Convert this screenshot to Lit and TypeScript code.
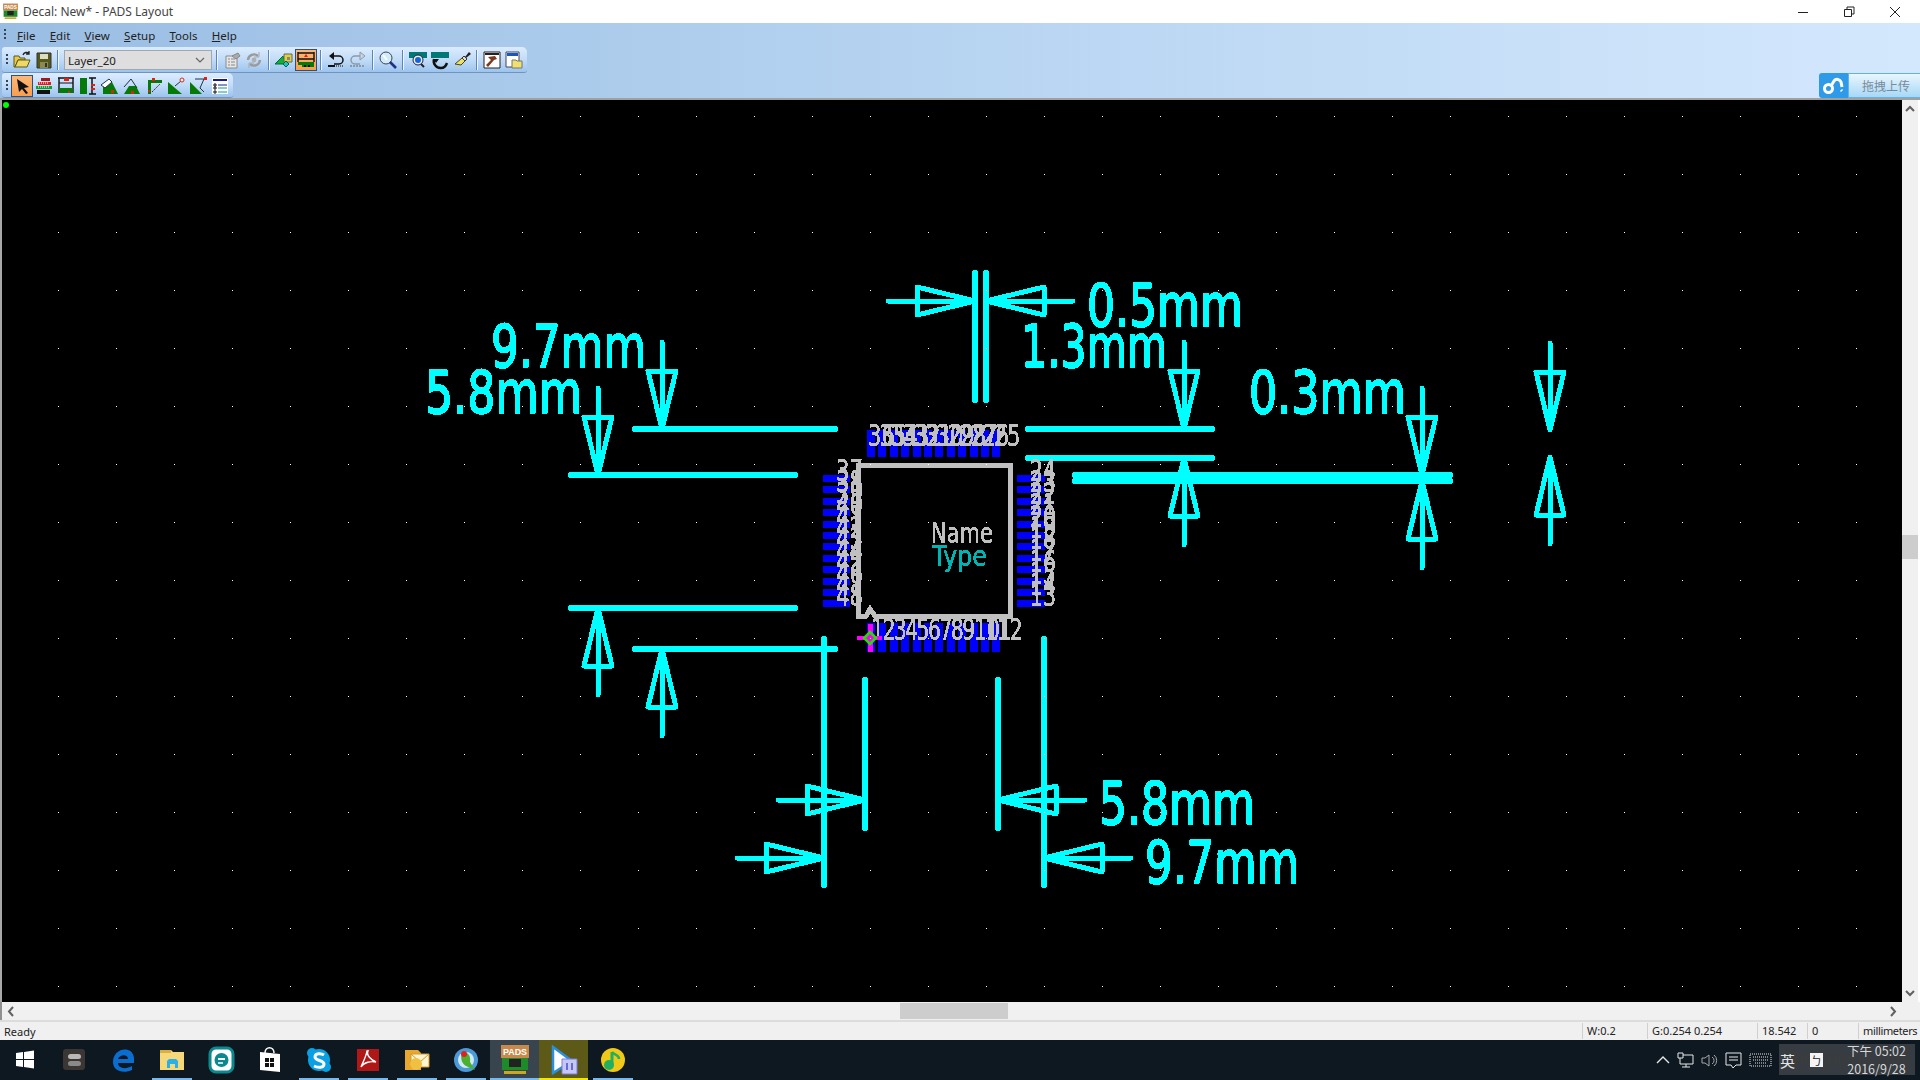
import {LitElement, css, html, svg} from 'lit';
import {customElement} from 'lit/decorators.js';

// --- decal drawing data, all in window pixels (the svg viewBox starts at the canvas corner)

type Dir = 'up' | 'down' | 'left' | 'right';

const LINES: number[][] = [
  [632, 429, 838, 429], [568, 475, 798, 475], [568, 608, 798, 608], [632, 649, 838, 649],
  [1025, 429, 1215, 429], [1025, 458, 1215, 458], [1072, 475, 1453, 475], [1072, 481, 1453, 481],
  [975, 270, 975, 403], [986, 270, 986, 403],
  [824, 636, 824, 888], [865, 677, 865, 831], [998, 677, 998, 831], [1044, 636, 1044, 888],
];

// tip x, tip y, direction from the tip to the tail
const ARROWS: [number, number, Dir][] = [
  [662, 429, 'up'], [598, 475, 'up'], [1184, 429, 'up'], [1422, 475, 'up'], [1550, 430, 'up'],
  [598, 608, 'down'], [662, 649, 'down'], [1184, 458, 'down'], [1422, 481, 'down'], [1550, 457, 'down'],
  [975, 301, 'left'], [986, 301, 'right'],
  [865, 800, 'left'], [824, 858, 'left'], [998, 800, 'right'], [1044, 858, 'right'],
];

const DIMS: [string, number, number, number][] = [
  ['9.7mm', 491, 367, 155], ['5.8mm', 425, 413, 157], ['0.5mm', 1087, 326, 156], ['1.3mm', 1021, 367, 146],
  ['0.3mm', 1249, 413, 157], ['5.8mm', 1099, 824, 156], ['9.7mm', 1145, 883, 154],
];

const PITCH = 11.4;
const idx = Array.from({length: 12}, (_, i) => i);

function arrow(x: number, y: number, d: Dir) {
  const v = d === 'up' || d === 'down';
  const s = d === 'up' || d === 'left' ? -1 : 1;
  const pt = (along: number, across: number) => (v ? [x + across, y + s * along] : [x + s * along, y + across]);
  const [tx, ty] = pt(87, 0);
  const a = pt(58, -14);
  const b = pt(58, 14);
  return svg`<line class="dim" x1=${x} y1=${y} x2=${tx} y2=${ty}></line>
    <polygon class="tri" points="${x},${y} ${a[0]},${a[1]} ${b[0]},${b[1]}"></polygon>`;
}

// the coordinates above include the round caps, so pull the ends in by 3
function dimLine([x1, y1, x2, y2]: number[]) {
  const h = y1 === y2 ? 3 : 0;
  const v = x1 === x2 ? 3 : 0;
  return svg`<line class="line" x1=${x1 + h} y1=${y1 + v} x2=${x2 - h} y2=${y2 - v}></line>`;
}

function label(t: string, x: number, y: number, w: number, cls: string) {
  return svg`<text class=${cls} x=${x} y=${y} textLength=${w} lengthAdjust="spacingAndGlyphs">${t}</text>`;
}

// --- toolbar icons, 20x20

const ICONS: Record<string, unknown> = {
  open: svg`<path d="M2 17V6h5l1 2h5v2H6l-3 7z" fill="#e8c850" stroke="#5a5a10"/><path d="M3 17l3-7h12l-3 7z" fill="#f0d868" stroke="#5a5a10"/><path d="M11 5c1-3 4-3 6-2M17 1v3h-3" fill="none" stroke="#222" stroke-width="1.3"/>`,
  save: svg`<path d="M3 3h14v15H3z" fill="#55581a" stroke="#333"/><path d="M6 4h8v5H6z" fill="#dcdcc0"/><path d="M6 12h8v6H6z" fill="#8a8a50"/><path d="M11 13h2v4h-2z" fill="#333"/>`,
  props: svg`<path d="M4 6h11v12H4z" fill="#e6e6e6" stroke="#8a8a8a"/><path d="M6 9h2M6 12h2M6 15h2M9 9h4M9 12h4M9 15h4" stroke="#888"/><path d="M10 6l6-3 2 3-4 3z" fill="#aaa" stroke="#888"/>`,
  refresh: svg`<path d="M4 10a6 6 0 0 1 10-4M16 10a6 6 0 0 1-10 4" fill="none" stroke="#9a9a9a" stroke-width="2.4"/><path d="M15 2v5h-5M5 18v-5h5" fill="none" stroke="#a8a8a8"/><circle cx="10" cy="10" r="2.4" fill="#b0b0b0"/>`,
  layer: svg`<path d="M1 14l8-8 3 8z" fill="#10b030" stroke="#064"/><path d="M10 4h8v8h-8z" fill="#e0d040" stroke="#665"/><path d="M13 7h3v3h-3z" fill="#887"/><path d="M12 11l3 3-3 3-3-3z" fill="#20c0d0" stroke="#064"/>`,
  decal: svg`<path d="M2 2v10M18 2v10M2 3h16M2 9h16" stroke="#111" stroke-width="1.4"/><path d="M8 7l2-3 2 3z" fill="#e02010"/><path d="M2 12h16v5H6v-2H2z" fill="#067a06"/><path d="M8 15h2v2H8zM12 15h2v2h-2z" fill="#111"/>`,
  undo: svg`<path d="M6 6h7a4 4 0 0 1 0 8H8" fill="none" stroke="#111" stroke-width="1.5"/><path d="M8 2L3 6l5 4z" fill="#111"/><path d="M2 16h7" stroke="#111" stroke-width="2"/><path d="M10 16h7" stroke="#666" stroke-dasharray="1 1" stroke-width="2"/>`,
  redo: svg`<path d="M14 6H7a4 4 0 0 0 0 8h5" fill="none" stroke="#8c9aa8" stroke-width="1.5"/><path d="M12 2l5 4-5 4z" fill="#c8d4e0" stroke="#8c9aa8"/><path d="M2 16h15" stroke="#8c9aa8" stroke-dasharray="2 1" stroke-width="2"/>`,
  zoom: svg`<circle cx="8" cy="8" r="6" fill="#d0ecf8" stroke="#445"/><path d="M5 5l4 5" stroke="#fff" stroke-width="2"/><path d="M12 12l6 6" stroke="#22308a" stroke-width="2.6"/>`,
  zoomBar: svg`<path d="M1 2h18v6H1z" fill="#007878"/><circle cx="10" cy="10" r="5" fill="#eef" stroke="#223"/><circle cx="10" cy="10" r="3" fill="#1464d8"/><path d="M13 14l3 3" stroke="#223" stroke-width="2"/>`,
  redraw: svg`<path d="M1 2h18v6H1z" fill="#007878"/><path d="M4 9a7 7 0 0 0 7 9c3 0 5-2 6-5" fill="none" stroke="#111" stroke-width="2.4"/><path d="M3 9h6l-3 4z" fill="#111"/>`,
  brush: svg`<path d="M13 7l4-5 2 2-5 4z" fill="#222"/><path d="M12 6l3 3-2 2-3-3z" fill="#ddd" stroke="#333"/><path d="M10 8l3 3-4 4-6-1z" fill="#f0e060" stroke="#443"/><path d="M3 17h6" stroke="#e8d840" stroke-dasharray="1 1"/>`,
  hammer: svg`<path d="M2 2h16v16H2z" fill="#fff" stroke="#222"/><path d="M3 3h14v2H3z" fill="#222"/><path d="M6 7l7-1 2 3-3 1-6 7-2-2 5-5z" fill="#7a3a20"/>`,
  folderWin: svg`<path d="M2 2h13v15H2z" fill="#fff" stroke="#445"/><path d="M3 3h11v3H3z" fill="#1a58b8"/><path d="M8 10h4l1 1h5v7H8z" fill="#f0e070" stroke="#776"/>`,
  arrow: svg`<path d="M5 3l12 8-5 1 4 5-2 1-4-5-3 3z" fill="#111"/>`,
  stack: svg`<path d="M7 2h9v3H7z" fill="#a01818"/><path d="M4 6h13v3H4z" fill="#e02020"/><path d="M2 10h16v3H2z" fill="#10a030"/><path d="M3 14h13v4H3z" fill="#111"/><path d="M5 7h10M4 11h12" stroke="#fff" stroke-dasharray="1 1"/>`,
  box: svg`<path d="M2 2h16M3 2v15M17 2v15" stroke="#111" stroke-width="1.4"/><path d="M8 2h5v3H8z" fill="#e02010"/><path d="M3 7h14" stroke="#111"/><path d="M3 12h14v5H3z" fill="#067a06"/><path d="M12 15h2v2h-2z" fill="#e02010"/>`,
  side: svg`<path d="M2 2h7v16H2z" fill="#067a06"/><path d="M11 2h7M11 18h7M14 2v16" stroke="#111" stroke-width="1.5"/><path d="M13 8h4v2h-4zM13 12h4v2h-4z" fill="#e02010"/>`,
  tri1: svg`<path d="M3 18V10l9-4 6 12z" fill="#067a06"/><path d="M1 9l8-6 3 3-7 6z" fill="#fff" stroke="#234"/><path d="M11 14h3v3h-3z" fill="#e02010"/>`,
  tri2: svg`<path d="M2 18l5-8h7l4 8z" fill="#067a06"/><path d="M2 11l7-8 6 9" fill="none" stroke="#234"/><path d="M9 15h3v3H9z" fill="#e02010"/>`,
  corner: svg`<path d="M4 18V4h14v3H7v11z" fill="#067a06"/><path d="M8 16l8-8" stroke="#234" stroke-dasharray="2 1"/><path d="M8 2h3v3H8zM4 14h2v2H4z" fill="#e02010"/>`,
  wedge1: svg`<path d="M2 6v12h14z" fill="#067a06"/><path d="M9 10l6-5" stroke="#234"/><circle cx="16" cy="4" r="2" fill="#fff" stroke="#e02010"/>`,
  wedge2: svg`<path d="M2 6v12h12z" fill="#067a06"/><path d="M7 3h9l-4 9 4 4" fill="none" stroke="#234"/><path d="M16 1h3v3h-3z" fill="#e02010"/>`,
  list: svg`<path d="M2 2h16v16H2z" fill="#fff"/><path d="M3 3h14v2H3z" fill="#1a1a90"/><path d="M4 8h2v2H4zM4 11h2v2H4zM4 15h2v2H4z" fill="none" stroke="#111"/><path d="M8 9h9" stroke="#1a1a90"/><path d="M8 12h9M8 16h9" stroke="#0a9a9a"/>`,
};

const TOOL_A = [['open', 'save'], ['COMBO'], ['props', 'refresh'], ['layer', 'decal'], ['undo', 'redo'], ['zoom'], ['zoomBar', 'redraw', 'brush'], ['hammer', 'folderWin']];
const TOOL_B = ['arrow', 'stack', 'box', 'side', 'tri1', 'tri2', 'corner', 'wedge1', 'wedge2', 'list'];

const padsIcon = svg`<path d="M2 1h28v13H2z" fill="#c88a4c"/><text x="16" y="11" class="pads-tag" textLength="24" lengthAdjust="spacingAndGlyphs">PADS</text><path d="M3 14h26v12H3z" fill="#1e8a2a"/><path d="M10 15h12v8H10z" fill="#222"/><path d="M5 27h22v3H5z" fill="#c8a820"/>`;

const TASK_ICONS: {icon: unknown; bar?: boolean; cls?: string}[] = [
  {icon: svg`<path d="M7 9l7-1v7H7zM15 8l10-1.6V15H15zM7 16h7v7l-7-1zM15 16h10v8.6L15 23z" fill="#fff"/>`},
  {icon: svg`<rect x="5" y="5" width="22" height="21" rx="3" fill="#3b3534"/><rect x="10" y="10" width="13" height="5" rx="2.5" fill="#b8b8b8"/><rect x="10" y="17" width="13" height="5" rx="2.5" fill="#8a8a8a"/>`},
  {icon: svg`<path d="M27 19H11c0 5 7 7 14 3v4c-9 4-19 1-19-8C6 9 14 4 21 6c4 1 6 5 6 9zM21 15c0-5-8-5-10 0z" fill="#0a6ed1"/>`},
  {icon: svg`<path d="M4 6h11l2 2h11v18H4z" fill="#f4d87a"/><path d="M4 6h11v3H4z" fill="#d8b040"/><path d="M11 24v-7l2-2h7l2 2v7h-3v-4h-5v4z" fill="#2ab0e8"/>`, bar: true},
  {icon: svg`<rect x="5" y="4" width="23" height="24" rx="6" fill="#fff" stroke="#0a8a8e" stroke-width="3"/><circle cx="16.500" cy="16" r="7" fill="#0a8a8e"/><path d="M13 15h7" stroke="#fff" stroke-width="2"/><path d="M13 19h5" stroke="#fff" stroke-width="1.5"/>`},
  {icon: svg`<path d="M11 9c0-7 9-7 9 0" fill="none" stroke="#fff" stroke-width="1.5"/><path d="M6 8l20 2v18l-20-2z" fill="#fff"/><path d="M11 14h4v4h-4zM16 14h4v4h-4zM11 19h4v4h-4zM16 19h4v4h-4z" fill="#111"/>`},
  {icon: svg`<circle cx="16" cy="16" r="11" fill="#0aa0e4"/><circle cx="9" cy="9" r="5" fill="#0aa0e4"/><circle cx="23" cy="23" r="5" fill="#0aa0e4"/><path d="M21 11c-3-2-9-2-9 2s9 3 9 7-6 4-10 2" fill="none" stroke="#fff" stroke-width="3"/>`, bar: true},
  {icon: svg`<path d="M5 5h22v22H5z" fill="#b01818"/><path d="M16 7c-2 4 3 9 8 11-5-1-12 0-15 5 2-5 5-10 6-16z" fill="none" stroke="#fff" stroke-width="1.4"/>`, bar: true},
  {icon: svg`<path d="M4 6h13l3 3v17H4z" fill="#e8a830"/><path d="M10 10h18v13H10z" fill="#fff4d0" stroke="#d0982c"/><path d="M10 10l9 8 9-8" fill="none" stroke="#d0982c"/><circle cx="15" cy="20" r="6" fill="#f0c040"/>`, bar: true},
  {icon: svg`<circle cx="16" cy="16" r="12" fill="#4a9ad8"/><circle cx="16" cy="16" r="8" fill="#d0e8f8"/><path d="M12 9c6-2 9 3 8 9l5 8-9-4c-4-2-6-8-4-13z" fill="#4ab030"/><circle cx="14" cy="10" r="3" fill="#e02020"/>`, bar: true},
  {icon: padsIcon, bar: true, cls: 'on-pads'},
  {icon: svg`<path d="M5 3l19 14L5 29z" fill="#fff" stroke="#2a8fe0" stroke-width="2.5"/><path d="M14 15h15v15H14z" fill="#c6c8f4" stroke="#7a7ae0"/><path d="M19 19v7M24 19v7" stroke="#6a6ae0" stroke-width="2"/>`, bar: true, cls: 'on-player'},
  {icon: svg`<circle cx="16" cy="16" r="12" fill="#f0c818"/><path d="M15 8v13" stroke="#20b060" stroke-width="3"/><circle cx="12" cy="21" r="5" fill="#20b060"/><path d="M15 8c3 4 7 2 7 7" fill="none" stroke="#20b060" stroke-width="2.5"/>`, bar: true},
];

@customElement('app-root')
export class AppRoot extends LitElement {
  static styles = css`
    :host {
      display: flex;
      flex-direction: column;
      width: 1920px;
      height: 1080px;
      overflow: hidden;
      font-family: 'Noto Sans', 'Liberation Sans', sans-serif;
      background: #f0f0f0;
    }

    /* title bar */
    .title {
      height: 23px;
      display: flex;
      align-items: center;
      background: #fff;
      padding-left: 2px;
      font-size: 12px;
      color: #444;
    }
    .title .app-ico { width: 17px; height: 17px; margin-right: 4px; }
    .caps { margin-left: auto; padding-right: 2px; display: flex; }
    .caps svg { width: 46px; height: 20px; display: block; }
    .caps .ln { fill: none; stroke: #222; }

    /* ribbon */
    .ribbon {
      height: 75px;
      background: linear-gradient(90deg, #9abde3 0%, #b4d2f0 45%, #d4e8fd 100%);
      border-bottom: 2px solid #a0a0a0;
      display: flex;
      flex-direction: column;
    }
    .menu {
      height: 24px;
      display: flex;
      align-items: center;
      padding-left: 4px;
      font-size: 11.5px;
      color: #222;
    }
    .menu .grip { margin-right: 11px; }
    .menu span { margin-right: 14.3px; }
    .menu u { text-decoration: underline; }
    .grip {
      width: 2px;
      height: 12px;
      background: repeating-linear-gradient(#345 0 2px, transparent 2px 4px);
      flex: none;
    }
    .bar {
      display: inline-flex;
      align-items: center;
      height: 26px;
      box-sizing: border-box;
      margin-left: 2px;
      padding: 1px 2px 0 0;
      background: linear-gradient(#dcecff, #c2dcf8 50%, #9cc4ee);
      border-bottom: 1px solid #6f94be;
      border-radius: 3px 5px 3px 3px;
    }
    .bar > .grip { margin: 0 3px 0 4px; }
    .row { display: flex; height: 26px; }
    .row.second { height: 25px; justify-content: space-between; }
    .row.second .bar { height: 25px; }
    .btn { width: 22px; height: 22px; box-sizing: border-box; flex: none; display: flex; align-items: center; justify-content: center; }
    .btn svg { width: 20px; height: 20px; display: block; }
    .btn.on { background: linear-gradient(#fbb878, #f99e50); border: 1px solid #30507a; }
    .sep { width: 8px; height: 20px; flex: none; display: flex; justify-content: center; }
    .sep::before { content: ''; width: 1px; background: #5f86b0; border-right: 1px solid #eef6ff; }
    .sep.narrow { width: 6px; }
    .sep.wide { width: 9px; }
    .combo {
      width: 148px;
      height: 20px;
      box-sizing: border-box;
      margin-left: 3px;
      padding: 0 6px 0 3px;
      background: #dedede;
      border: 1px solid #a0a8b0;
      display: flex;
      align-items: center;
      justify-content: space-between;
      font-size: 11.5px;
      color: #222;
    }
    .combo svg { width: 10px; height: 6px; fill: none; stroke: #666; stroke-width: 1.2; }
    .upload { display: flex; width: 101px; height: 25px; box-sizing: border-box; }
    .upload .logo { width: 29px; background: #2f9ae8; border-radius: 3px 0 0 3px; display: flex; align-items: center; justify-content: center; }
    .upload .logo svg { width: 24px; height: 18px; fill: none; stroke: #fff; stroke-width: 3; }
    .upload .txt {
      flex: 1;
      background: linear-gradient(#e9f6fe, #a6d8f6);
      border: 1px solid #63b1e8;
      border-right: none;
      display: flex;
      align-items: center;
      padding-left: 13px;
      font: 12px 'Noto Sans CJK SC', sans-serif;
      color: #78899a;
    }

    /* work area */
    .main { flex: none; height: 902px; display: flex; padding-left: 2px; background: #a8a8a8; }
    .canvas { width: 1900px; height: 902px; display: block; background: #000; }
    .vscroll { width: 18px; background: #f0f0f0; border-right: 2px solid #fff; box-sizing: border-box; display: flex; flex-direction: column; align-items: center; }
    .vscroll .thumb { width: 16px; height: 24px; background: #cdcdcd; margin-top: 418px; margin-bottom: auto; }
    .chev { width: 10px; height: 17px; flex: none; fill: none; stroke: #606060; stroke-width: 2; }
    .hscroll { height: 18px; display: flex; align-items: center; padding: 0 22px 0 4px; box-sizing: border-box; background: #f0f0f0; border-left: 2px solid #909090; }
    .hscroll .thumb { width: 108px; height: 16px; background: #cdcdcd; margin-left: 884px; margin-right: auto; }
    .status {
      height: 20px;
      flex: none;
      display: flex;
      align-items: center;
      box-sizing: border-box;
      border-top: 2px solid #dcdcdc;
      font-size: 11px;
      color: #222;
      background: #f0f0f0;
    }
    .status .ready { width: 1582px; padding-left: 4px; box-sizing: border-box; }
    .status .cell { height: 16px; line-height: 16px; box-sizing: border-box; border-left: 1px solid #d0d0d0; padding-left: 4px; white-space: nowrap; }
    .status .cell.units { letter-spacing: -0.35px; }

    /* taskbar */
    .taskbar { flex: 1; background: #0e1820; display: flex; position: relative; color: #e4e4e4; }
    .task { width: 49px; height: 40px; box-sizing: border-box; display: flex; align-items: center; justify-content: center; position: relative; }
    .task svg { width: 32px; height: 32px; }
    .task.mark::after { content: ''; position: absolute; left: 5px; right: 4px; bottom: 0; height: 2px; background: #76b9ed; }
    .task.on-pads { background: #38444e; }
    .task.on-player { background: #5c5a16; }
    .task.on-player::after { background: #f2e600; left: 0; right: 0; }
    .task.on-pads::after { left: 0; right: 0; }
    .tray { margin-left: auto; display: flex; align-items: center; padding-right: 14px; position: relative; z-index: 1; }
    .tray svg { height: 20px; display: block; fill: none; stroke: #e8e8e8; }
    .tray .ti { margin-right: 7px; }
    .tray .lang { font: 15px 'Noto Sans CJK SC', sans-serif; margin: 0 15px 0 1px; }
    .tray .ime {
      width: 13px;
      height: 14px;
      margin-right: 24px;
      background: #f4f4f4;
      color: #222;
      font: 11px/14px 'Noto Sans CJK TC', sans-serif;
      text-align: center;
    }
    .clock { font: 12.5px/18px 'Noto Sans CJK SC', 'Noto Sans', sans-serif; text-align: center; color: #d8d8d8; }
    .wm {
      position: absolute;
      left: 1779px;
      top: 4px;
      width: 136px;
      height: 31px;
      box-sizing: border-box;
      padding-right: 5px;
      background: rgba(120, 120, 120, 0.38);
      color: #3c3c3c;
      font: 18px/31px 'Liberation Sans', sans-serif;
      text-align: right;
      white-space: nowrap;
    }

    /* canvas marks */
    .dim { stroke: #0ff; stroke-width: 5; stroke-linecap: round; shape-rendering: crispEdges; }
    .line { stroke: #0ff; stroke-width: 6; stroke-linecap: round; shape-rendering: crispEdges; }
    .tri { fill: none; stroke: #0ff; stroke-width: 5; stroke-linejoin: round; shape-rendering: crispEdges; }
    .pad { fill: #0000ff; shape-rendering: crispEdges; }
    .outline { fill: none; stroke: #c0c0c0; stroke-width: 5; shape-rendering: crispEdges; }
    .big { font: 59px 'DejaVu Sans', sans-serif; fill: #0ff; stroke: #0ff; stroke-width: 1.8; stroke-linejoin: round; }
    .pin { font: 31px 'DejaVu Sans', sans-serif; fill: #c0c0c0; stroke: #c0c0c0; stroke-width: 0.5; }
    .name { font: 29px 'DejaVu Sans', sans-serif; fill: #c0c0c0; stroke: #c0c0c0; stroke-width: 0.4; }
    .type { fill: #00b4b4; stroke: #00b4b4; }
    .pads-tag { font: bold 9px 'Liberation Sans', sans-serif; fill: #fff; text-anchor: middle; }
  `;

  private drawing() {
    return svg`
      <defs>
        <pattern id="grid" width="58" height="58" patternUnits="userSpaceOnUse">
          <rect x="0" y="0" width="1" height="1" fill="#fff"></rect>
        </pattern>
        <filter id="crisp" filterUnits="userSpaceOnUse" x="0" y="100" width="1920" height="902" color-interpolation-filters="sRGB">
          <feComponentTransfer><feFuncA type="discrete" tableValues="0 1"></feFuncA></feComponentTransfer>
        </filter>
      </defs>
      ${LINES.map(dimLine)}
      ${ARROWS.map(([x, y, d]) => arrow(x, y, d))}
      <g filter="url(#crisp)">${DIMS.map(([t, x, y, w]) => label(t, x, y, w, 'big'))}</g>

      ${idx.map((i) => svg`
        <rect class="pad" x=${867 + i * PITCH} y="430" width="8" height="27"></rect>
        <rect class="pad" x=${867 + i * PITCH} y="623" width="8" height="29"></rect>
        <rect class="pad" x="823" y=${475 + i * PITCH} width="27" height="7"></rect>
        <rect class="pad" x="1017" y=${475 + i * PITCH} width="28" height="7"></rect>`)}
      <rect x="868" y="624" width="5" height="28" fill="#ff00ff"></rect>
      <polyline class="outline" points="858,608 858,465 1010,465 1010,616 875,616 870,609 866,616 858,616 858,606"></polyline>

      <g filter="url(#crisp)">
        ${idx.map((i) => label(String(36 - i), 868 + i * PITCH, 446, 27, 'pin'))}
        ${idx.map((i) => label(String(37 + i), 836, 481 + i * PITCH, 27, 'pin'))}
        ${idx.map((i) => label(String(24 - i), 1030, 481 + i * PITCH, 26, 'pin'))}
        ${idx.map((i) => (i < 9
          ? label(String(i + 1), 871 + i * PITCH, 640, 13, 'pin')
          : label(String(i + 1), 974 + (i - 9) * PITCH, 640, 26, 'pin')))}
        ${label('Name', 931, 543, 62, 'name')}
        ${label('Type', 932, 566, 55, 'name type')}
      </g>

      <path d="M857 638h25M870 624v28" stroke="#ff00ff" stroke-width="4" shape-rendering="crispEdges"></path>
      <path d="M870 632l6 6-6 6-6-6z" fill="none" stroke="#20e000" stroke-width="2.5"></path>
      <circle cx="6" cy="105" r="3" fill="#00ff00"></circle>
      <rect x="2" y="100" width="1900" height="902" fill="url(#grid)"></rect>`;
  }

  private btn(name: string, on = false) {
    return html`<div class="btn ${on ? 'on' : ''}"><svg viewBox="0 0 20 20">${ICONS[name]}</svg></div>`;
  }

  private toolbarA() {
    return TOOL_A.map((grp, g) => html`
      ${g > 0 ? html`<div class="sep ${g === 1 ? 'narrow' : g === 2 ? 'wide' : ''}"></div>` : ''}
      ${grp[0] === 'COMBO'
        ? html`<div class="combo">Layer_20<svg viewBox="0 0 10 6"><path d="M1 1l4 4 4-4"></path></svg></div>`
        : grp.map((n) => this.btn(n, n === 'decal'))}`);
  }

  render() {
    return html`
      <div class="title">
        <svg class="app-ico" viewBox="0 0 32 32">${padsIcon}</svg>
        Decal: New* - PADS Layout
        <div class="caps">
          <svg viewBox="0 0 46 20"><path class="ln" d="M18 10.5h10"></path></svg>
          <svg viewBox="0 0 46 20"><path class="ln" d="M18.500 7.500h7v7h-7zM21 7V5h7v7h-2"></path></svg>
          <svg viewBox="0 0 46 20"><path class="ln" d="M18 5l10 10M28 5L18 15"></path></svg>
        </div>
      </div>

      <div class="ribbon">
        <div class="menu">
          <div class="grip"></div>
          ${['File', 'Edit', 'View', 'Setup', 'Tools', 'Help'].map((m) => html`<span><u>${m[0]}</u>${m.slice(1)}</span>`)}
        </div>
        <div class="row">
          <div class="bar"><div class="grip"></div>${this.toolbarA()}</div>
        </div>
        <div class="row second">
          <div class="bar"><div class="grip"></div>${TOOL_B.map((n) => this.btn(n, n === 'arrow'))}</div>
          <div class="upload">
            <div class="logo">
              <svg viewBox="0 0 24 18"><circle cx="6.500" cy="11.500" r="4"></circle><path d="M9 9l3-5a4 4 0 0 1 7 1l1 5"></path><path d="M19 13l1 1"></path></svg>
            </div>
            <div class="txt">拖拽上传</div>
          </div>
        </div>
      </div>

      <div class="main">
        <svg class="canvas" viewBox="2 100 1900 902">${this.drawing()}</svg>
        <div class="vscroll">
          <svg class="chev" viewBox="0 0 10 17"><path d="M1 11l4-4 4 4"></path></svg>
          <div class="thumb"></div>
          <svg class="chev" viewBox="0 0 10 17"><path d="M1 6l4 4 4-4"></path></svg>
        </div>
      </div>

      <div class="hscroll">
        <svg class="chev" viewBox="0 0 10 17"><path d="M7 4L3 8.500 7 13"></path></svg>
        <div class="thumb"></div>
        <svg class="chev" viewBox="0 0 10 17"><path d="M3 4l4 4.500L3 13"></path></svg>
      </div>

      <div class="status">
        <div class="ready">Ready</div>
        ${([['W:0.2', 65, ''], ['G:0.254 0.254', 110, ''], ['18.542', 50, ''], ['0', 51, ''], ['millimeters', 62, 'units']] as [string, number, string][]).map(
          ([t, w, c]) => html`<div class="cell ${c}" style="width:${w}px">${t}</div>`)}
      </div>

      <div class="taskbar">
        ${TASK_ICONS.map((t) => html`<div class="task ${t.bar ? 'mark' : ''} ${t.cls ?? ''}"><svg viewBox="0 0 32 32">${t.icon}</svg></div>`)}
        <div class="wm">bbs.pigoo.com</div>
        <div class="tray">
          <svg class="ti" width="14" viewBox="0 0 14 20"><path d="M1 13l6-6 6 6" stroke-width="1.4"></path></svg>
          <svg class="ti" width="17" viewBox="0 0 17 20"><path d="M1 3h5v5H1zM6 5h10v9H3V8M9 14v3M5 17h8"></path></svg>
          <svg class="ti" width="17" viewBox="0 0 17 20"><path d="M1 8h3l4-3v11l-4-3H1zM11 7a4 4 0 0 1 0 7M13 5a7 7 0 0 1 0 11" stroke="#a8a8a8"></path></svg>
          <svg class="ti" width="17" viewBox="0 0 17 20"><path d="M1 3h15v12h-5l-3 3-2-3H1zM4 7h9M4 10h9"></path></svg>
          <svg class="ti" width="23" viewBox="0 0 23 20"><path d="M1 4h21v12H1zM4 7h15M4 10h15M6 13h11" stroke-dasharray="1 1"></path></svg>
          <span class="lang">英</span>
          <div class="ime">ㄅ</div>
          <div class="clock">下午 05:02<br />2016/9/28</div>
        </div>
      </div>
    `;
  }
}
